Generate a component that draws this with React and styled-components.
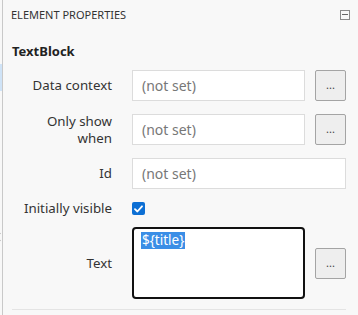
import React from "react";
import styled, { createGlobalStyle } from "styled-components";

const Global = createGlobalStyle`
  html, body { margin: 0; padding: 0; background: #f8f8f8; }
  body { font-family: "Noto Sans", "Open Sans", sans-serif; color: #333; }
  * { box-sizing: border-box; }
`;

const Shell = styled.div`
  display: flex;
  width: 358px;
  height: 315px;
  background: #f8f8f8;
  overflow: hidden;
`;

const Gutter = styled.div`
  position: relative;
  width: 2px;
  flex: none;
`;

const GutterMark = styled.div`
  position: absolute;
  left: 0;
  top: 64px;
  width: 2px;
  height: 27px;
  background: #cfe3f7;
`;

const GutterChevron = styled.div`
  position: absolute;
  left: -3px;
  top: 234px;
  width: 6px;
  height: 6px;
  border-left: 1px solid #999;
  border-bottom: 1px solid #999;
  transform: rotate(45deg);
`;

const Panel = styled.div`
  flex: 1;
  min-width: 0;
  border-left: 1px solid #c9c9c9;
  display: flex;
  flex-direction: column;
`;

const Header = styled.div`
  flex: none;
  height: 31px;
  display: flex;
  align-items: center;
  justify-content: space-between;
  padding: 0 8px 2px 8px;
`;

const HeaderTitle = styled.div`
  font-size: 11px;
  color: #333;
`;

const CollapseBox = styled.div`
  width: 10px;
  height: 10px;
  border: 1px solid #8a8a8a;
  display: flex;
  align-items: center;
  justify-content: center;
  &::after {
    content: "";
    width: 6px;
    height: 1px;
    background: #666;
  }
`;

const Title = styled.div`
  flex: none;
  font-weight: 700;
  font-size: 13px;
  line-height: 17px;
  color: #222;
  padding: 12px 0 0 9px;
  height: 39px;
`;

const Form = styled.div`
  flex: none;
  display: grid;
  grid-template-columns: 110px 173px 31px;
  column-gap: 10px;
  row-gap: 13px;
  padding: 0 0 0 9px;
  align-items: center;
`;

const Label = styled.div`
  grid-column: 1;
  justify-self: end;
  text-align: right;
  max-width: 90px;
  padding-right: 10px;
  box-sizing: content-box;
  font-size: 13.3px;
  line-height: 17px;
  color: #333;
  white-space: ${(p) => (p.$nowrap ? "nowrap" : "normal")};
  margin: -2px 0;
`;

const Field = styled.div`
  grid-column: ${(p) => (p.$wide ? "2 / span 2" : "2")};
  height: 31px;
  background: #fff;
  border: 1px solid #dcdcdc;
  display: flex;
  align-items: center;
  padding-left: 9px;
  font-size: 14px;
  color: #777;
`;

const TextArea = styled.div`
  grid-column: 2;
  height: 72px;
  margin-top: -1px;
  background: #fff;
  border: 2px solid #111;
  border-radius: 4px;
  padding: 3px 0 0 7px;
  font-size: 13.5px;
  line-height: 17px;
`;

const Selected = styled.span`
  background: #3a8ee6;
  color: #fff;
  display: inline-block;
  line-height: 17px;
  padding: 0 1px;
`;

const MoreButton = styled.div`
  grid-column: 3;
  width: 31px;
  height: 31px;
  background: #eeeeee;
  border: 1px solid #a4a4a4;
  border-radius: 2px;
  display: flex;
  align-items: center;
  justify-content: center;
  font-size: 11px;
  color: #444;
  padding-bottom: 3px;
`;

const CheckCell = styled.div`
  grid-column: 2;
  height: 17px;
  margin: -2px 0;
  display: flex;
  align-items: center;
`;

const Check = styled.div`
  width: 13px;
  height: 13px;
  border-radius: 2px;
  background: #0d6fd4;
  display: flex;
  align-items: center;
  justify-content: center;
`;

const Divider = styled.div`
  flex: none;
  margin: 10px 12px 0 9px;
  height: 1px;
  background: #e4e4e4;
`;

export default function App() {
  return (
    <Shell>
      <Global />
      <Gutter>
        <GutterMark />
        <GutterChevron />
      </Gutter>
      <Panel>
        <Header>
          <HeaderTitle>ELEMENT PROPERTIES</HeaderTitle>
          <CollapseBox />
        </Header>
        <Title>TextBlock</Title>
        <Form>
          <Label>Data context</Label>
          <Field>(not set)</Field>
          <MoreButton>...</MoreButton>

          <Label>Only show when</Label>
          <Field>(not set)</Field>
          <MoreButton>...</MoreButton>

          <Label>Id</Label>
          <Field $wide>(not set)</Field>

          <Label $nowrap>Initially visible</Label>
          <CheckCell>
            <Check>
              <svg width="9" height="8" viewBox="0 0 9 8">
                <path d="M1 4.2 L3.4 6.5 L8 1.3" fill="none" stroke="#fff" strokeWidth="1.8" strokeLinecap="round" strokeLinejoin="round" />
              </svg>
            </Check>
          </CheckCell>

          <Label>Text</Label>
          <TextArea>
            <Selected>${"{title}"}</Selected>
          </TextArea>
          <MoreButton>...</MoreButton>
        </Form>
        <Divider />
      </Panel>
    </Shell>
  );
}
